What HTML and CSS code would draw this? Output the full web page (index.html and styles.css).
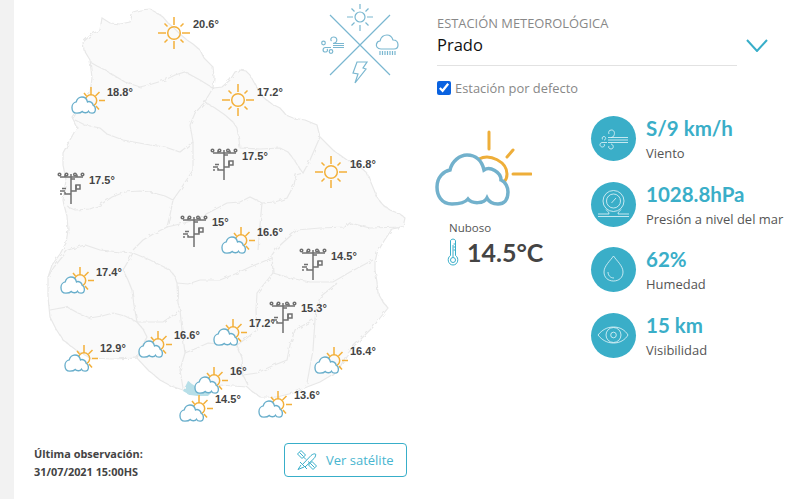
FILE: index.html
```html
<!DOCTYPE html>
<html lang="es">
<head>
  <meta charset="UTF-8">
  <meta name="viewport" content="width=device-width, initial-scale=1.0">
  <title>Estación meteorológica</title>
  <link rel="stylesheet" href="styles.css">
</head>
<body>

<div class="strip"></div>

<section class="left">
  <svg class="map" viewBox="14 0 406 432" width="406" height="432">
    <defs>
      <filter id="rough" x="-5%" y="-5%" width="110%" height="110%">
        <feTurbulence type="fractalNoise" baseFrequency="0.22" numOctaves="2" seed="4"/>
        <feDisplacementMap in="SourceGraphic" scale="3.5"/>
      </filter>
      <symbol id="sun" viewBox="-17 -17 34 34" overflow="visible">
        <g class="sun-line">
          <circle r="6.3"/>
          <path d="M0-16V-8M0 16V8M-16 0H-8M16 0H8M-9.5-9.5L-6.5-6.5M9.5-9.5L6.5-6.5M-9.5 9.5L-6.5 6.5M9.5 9.5L6.5 6.5"/>
        </g>
      </symbol>
      <symbol id="cloudsun" viewBox="0 0 33 28" overflow="visible">
        <g class="sun-line">
          <circle cx="19" cy="13.5" r="5.7"/>
          <path d="M19 0V8M23.5 9L27.5 5M27 13.5H33M24 19L27 22.5M12 6L14.5 9"/>
        </g>
        <path class="cloud-small" transform="translate(-.7 1.75) scale(.33)" d="M17 74C6 74 2 65 2 57C2 47 9 41 15 40C17 31 25 25 32 25C41 25 47 31 49 40C55 36 66 42 66 50C71 52 73 58 73 62C73 70 69 74 63 74C58 74 54 72 52 68C49 74 37 74 33 69C29 74 22 74 17 74Z"/>
      </symbol>
      <symbol id="station" viewBox="0 0 28 33" overflow="visible">
        <g class="station-line">
          <path d="M14 2V32M3 5H26M8 2.5V5M20 2.5V5M18 7H14M19 13V19H14M14 22H8V20M3 19H8M5 16.500H9M3 22H5"/>
          <circle cx="2.500" cy="2.500" r="1.300"/>
          <circle cx="9.500" cy="2.500" r="1.300"/>
          <circle cx="18" cy="2.500" r="1.300"/>
          <circle cx="25.500" cy="2.500" r="1.300"/>
          <rect x="19" y="13" width="4" height="4"/>
        </g>
      </symbol>
    </defs>

    <!-- pais -->
    <g filter="url(#rough)">
      <path class="land" d="M133 12L140 10L150 9L157 13L163 17L168 23L173 27L180 34L187 40L193 44L200 50L204 58L213 67L214 77L213 88L222 87L230 80L235 72L240 70L246 71L250 75L256 86L263 97L272 104L280 108L286 115L293 118L305 120L317 125L320 137L327 144L333 150L340 155L347 160L358 165L367 173L372 185L377 197L383 205L390 210L400 214L405 218L403 227L392 229L384 241L377 253L375 262L375 270L377 282L378 293L383 302L388 308L380 318L373 327L363 337L353 347L346 356L340 367L330 376L320 382L307 387L293 393L277 397L260 397L253 392L247 387L233 386L220 385L213 390L207 393L195 392L183 390L171 386L160 380L148 370L137 358L112 359L90 358L76 350L63 340L56 329L50 317L48 297L48 277L52 265L60 254L66 243L68 230L67 216L64 205L63 200L66 180L63 165L63 153L70 140L77 127L72 117L80 105L90 93L92 78L90 60L84 50L83 42L92 34L100 30L102 18L110 23L120 24L130 22Z"/>
      <g class="dept">
        <path d="M90 62L97 66L105 70L115 76L125 82L140 87L152 84L165 80L175 75L185 72L200 80L213 88"/>
        <path d="M213 88L207 98L205 102L195 113L190 125L192 136L193 142L180 152L165 147L150 145L123 140L107 134L100 128L85 125L75 120"/>
        <path d="M205 102L215 108L225 115L233 122L237 128L239 140L240 148L260 149L280 148L288 152L293 158L298 166L303 173L310 160L320 137"/>
        <path d="M303 173L296 175L294 185L287 198L275 202L262 203L250 197L240 202L227 203L210 212L195 220L180 224L167 227"/>
        <path d="M193 142L193 160L193 170L180 190L173 200L170 215L167 227L155 233L143 240L133 250"/>
        <path d="M68 207L75 210L90 209L100 205L112 197L125 192L140 191L150 192L165 196L173 200"/>
        <path d="M262 203L260 225L258 250"/>
        <path d="M273 273L272 255L277 248L297 230L320 228L345 227L350 223L370 228L403 227"/>
        <path d="M48 277L54 267L68 250L85 245L100 250L120 252L133 253"/>
        <path d="M50 310L67 307L78 313L90 318L102 316L113 313L125 316L137 322L143 329L147 337L141 348L137 358"/>
        <path d="M133 253L123 270L128 280L132 290L134 305L137 322L150 322L163 322L172 316L180 310L182 330L185 353L180 370L183 388"/>
        <path d="M133 253L150 260L170 270L175 277L177 283L178 303L180 310"/>
        <path d="M177 283L188 284L200 280L220 280L235 274L250 267L272 258"/>
        <path d="M185 353L197 348L208 343L222 344L237 345L242 358L243 375L248 385"/>
        <path d="M237 345L248 337L257 330L256 310L257 293L265 283L273 273"/>
        <path d="M273 273L290 278L310 282L333 282L350 272L373 260"/>
        <path d="M337 283L320 297L316 310L315 320L313 350L307 383"/>
        <path d="M313 320L295 330L290 345L287 360L272 366L257 373L243 375"/>
      </g>
      <path class="capital" d="M188 381L192 384L198 388L204 389L212 392L208 396L198 396L190 395L183 391Z"/>
    </g>

    <!-- etiquetas -->
    <g class="temp">
      <text x="193" y="28">20.6°</text>
      <text x="107" y="96">18.8°</text>
      <text x="257" y="96">17.2°</text>
      <text x="242" y="160">17.5°</text>
      <text x="350" y="168">16.8°</text>
      <text x="89" y="184">17.5°</text>
      <text x="212" y="226">15°</text>
      <text x="257" y="236">16.6°</text>
      <text x="331" y="260">14.5°</text>
      <text x="96" y="276">17.4°</text>
      <text x="301" y="312">15.3°</text>
      <text x="249" y="327">17.2°</text>
      <text x="174" y="339">16.6°</text>
      <text x="100" y="352">12.9°</text>
      <text x="350" y="355">16.4°</text>
      <text x="230" y="375">16°</text>
      <text x="215" y="403">14.5°</text>
      <text x="294" y="399">13.6°</text>
    </g>

    <!-- iconos del mapa -->
    <use href="#sun" x="157" y="16" width="34" height="34"/>
    <use href="#sun" x="221" y="83" width="34" height="34"/>
    <use href="#sun" x="314" y="155" width="34" height="34"/>
    <use href="#cloudsun" x="72" y="87" width="33" height="28"/>
    <use href="#cloudsun" x="222" y="227" width="33" height="28"/>
    <use href="#cloudsun" x="61" y="267" width="33" height="28"/>
    <use href="#cloudsun" x="65" y="345" width="33" height="28"/>
    <use href="#cloudsun" x="139" y="331" width="33" height="28"/>
    <use href="#cloudsun" x="214" y="319" width="33" height="28"/>
    <use href="#cloudsun" x="195" y="367" width="33" height="28"/>
    <use href="#cloudsun" x="180" y="395" width="33" height="28"/>
    <use href="#cloudsun" x="259" y="391" width="33" height="28"/>
    <use href="#cloudsun" x="315" y="347" width="33" height="28"/>
    <use href="#station" x="57" y="172" width="28" height="33"/>
    <use href="#station" x="210" y="148" width="28" height="33"/>
    <use href="#station" x="180" y="215" width="28" height="33"/>
    <use href="#station" x="299" y="248" width="28" height="33"/>
    <use href="#station" x="269" y="301" width="28" height="33"/>

    <!-- logo -->
    <g class="logo">
      <path d="M330 15L390 75M390 15L330 75"/>
      <circle cx="360" cy="17" r="5"/>
      <path d="M360 4V9M360 25V31M347 17H353M367 17H373M351.500 8.500L354.500 11.500M368.500 8.500L365.500 11.500M351.500 25.500L354.500 22.500M368.500 25.500L365.500 22.500"/>
      <path d="M333 43.500H344M333 45.500H344M333 47.500H344M333 43.500C338 43 338 37 333.500 37C331 37 330 39.500 331.500 41"/>
      <circle cx="323.500" cy="43" r="1.800"/>
      <path d="M331 47.500H325.500C322 48 322.500 52 325.500 52C327.500 52 328 50 327 49"/>
      <circle cx="331" cy="51.500" r="1.800"/>
      <path d="M381 49C377 49 376 46 376.500 44C377 42 379 41 380 41C381 37 384 35 387 35C390 35 392 37 393 40C396 40 398 42 398 45C398 48 396 49 394 49Z"/>
      <path d="M380 51V55M382.500 51V55M385 51V55M387.500 51V55M390 51V55M392.500 51V55M395 51V55"/>
      <path d="M357 62H367L363 68L366 69L355 83L358 74L353 73Z"/>
    </g>
  </svg>

  <div class="obs">
    <p class="obs-text">Última observación:<br>31/07/2021 15:00HS</p>
    <button class="sat-btn">
      <svg class="sat-icon" viewBox="0 0 20 20" width="20" height="20">
        <path d="M0.500 4L4 0.500L8.500 5L5 8.500ZM2.500 2.500L6.500 6.500M11.500 15L15 11.500L19.500 16L16 19.500ZM13.500 13.500L17.500 17.500M5 15L14 5.500C15.500 4 18 3.500 18.500 4C19 4.500 18.500 7 17 8.500L8 17M6.500 7L9 9.500M11 11.500L13.500 13.500M3 12L10 19M4 15L1 19.500L7 17"/>
      </svg>
      Ver satélite
    </button>
  </div>
</section>

<section class="right">
  <header class="station-head">
    <div class="station-select">
      <span class="station-title">ESTACIÓN METEOROLÓGICA</span>
      <span class="station-name">Prado</span>
    </div>
    <svg class="chevron" viewBox="0 0 22 13" width="22" height="13"><path d="M1 1L11 12L21 1"/></svg>
  </header>
  <label class="default-check"><input type="checkbox" checked> Estación por defecto</label>

  <div class="weather">
    <div class="current">
      <svg class="big-icon" viewBox="0 0 97 77" width="97" height="77">
        <path class="big-sun" d="M54 2V19M72 27L78 20M78 44H96M44 29C55 23 72 32 72 44C72 47 71 50 69 52"/>
        <path class="big-cloud" d="M17 74C6 74 2 65 2 57C2 47 9 41 15 40C17 31 25 25 32 25C41 25 47 31 49 40C55 36 66 42 66 50C71 52 73 58 73 62C73 70 69 74 63 74C58 74 54 72 52 68C49 74 37 74 33 69C29 74 22 74 17 74Z"/>
      </svg>
      <div class="cond">Nuboso</div>
      <div class="temp-now">
        <svg class="thermo" viewBox="0 0 12 28" width="12" height="28">
          <path d="M3.500 3C3.500 0.500 8.500 0.500 8.500 3V17.500C12.500 20 11 27 6 27C1 27 -0.500 20 3.500 17.500Z"/>
          <path d="M6 7V19M8.500 6H6.500M8.500 9H6.500M8.500 12H6.500"/>
          <circle cx="6" cy="22" r="2.500"/>
        </svg>
        <span>14.5°C</span>
      </div>
    </div>

    <ul class="stats">
      <li class="stat">
        <span class="stat-icon">
          <svg viewBox="0 0 45 45" width="45" height="45">
            <path d="M17 21.500H37M17 24H37M17 26.500H37M20 21.500C24 21.500 25 14 20.500 14C18 14 17 16 18 18M13 24C15 24 15.500 21 13 20.500C11 20.500 10.500 23 12 23.500M16 26.500H11C8 27 8.500 31 11.500 31C13.500 31 14 29 13 28M20 28C23 28.500 23 33 20 33C18 33 17 31 18 30"/>
          </svg>
        </span>
        <div class="stat-text"><b>S/9 km/h</b><span>Viento</span></div>
      </li>
      <li class="stat">
        <span class="stat-icon">
          <svg viewBox="0 0 45 45" width="45" height="45">
            <circle cx="22.500" cy="19" r="10.500"/>
            <circle cx="22.500" cy="19" r="7"/>
            <path d="M20.500 21L25 16M7 32H18C18 30 16.500 29.500 15 27.500M38 32H27C27 30 28.500 29.500 30 27.500M7 34.500H38"/>
          </svg>
        </span>
        <div class="stat-text"><b>1028.8hPa</b><span>Presión a nivel del mar</span></div>
      </li>
      <li class="stat">
        <span class="stat-icon">
          <svg viewBox="0 0 45 45" width="45" height="45">
            <path d="M22.500 9C19 14 13 19 13 25C13 30.500 17 34 22.500 34C28 34 32 30.500 32 25C32 19 26 14 22.500 9Z"/>
            <path d="M17 25C17 28 19 31 23 31"/>
          </svg>
        </span>
        <div class="stat-text"><b>62%</b><span>Humedad</span></div>
      </li>
      <li class="stat">
        <span class="stat-icon">
          <svg viewBox="0 0 45 45" width="45" height="45">
            <path d="M7 22C11 17 16 14 22.500 14C29 14 34 17 37 22C34 27 29 30 22.500 30C16 30 11 27 7 22Z"/>
            <circle cx="22.500" cy="22" r="7.500"/>
            <circle cx="22.500" cy="22" r="2.800"/>
          </svg>
        </span>
        <div class="stat-text"><b>15 km</b><span>Visibilidad</span></div>
      </li>
    </ul>
  </div>
</section>

</body>
</html>
```

FILE: styles.css
```css
body {
  display: flex;
  width: 788px;
  height: 499px;
  margin: 0;
  overflow: hidden;
  background-color: #fff;
  color: #555;
  font-family: 'Open Sans', sans-serif;
}

.strip {
  width: 14px;
  flex-shrink: 0;
  background-color: #f2f2f2;
}

.left {
  display: flex;
  flex-direction: column;
  width: 406px;
  flex-shrink: 0;
}

.map {
  display: block;
  flex-shrink: 0;
}

.land {
  fill: #fafafa;
  stroke: #e8e8e8;
  stroke-width: 1.2;
}

.dept path {
  fill: none;
  stroke: #e8e8e8;
  stroke-width: 1.2;
}

.capital {
  fill: #b7dfe8;
}

.temp text {
  fill: #444;
  font-family: 'Liberation Sans', sans-serif;
  font-size: 11px;
  font-weight: 700;
}

.sun-line {
  fill: none;
  stroke: #f3b03a;
  stroke-width: 1.5;
}

.cloud-small {
  fill: #fff;
  stroke: #68aecb;
  stroke-width: 4;
}

.station-line {
  fill: none;
  stroke: #707070;
  stroke-width: 1.5;
}

.logo {
  fill: none;
  stroke: #7ab7d0;
  stroke-width: 1.2;
}

.obs {
  display: flex;
  align-items: flex-start;
  justify-content: space-between;
  padding: 11px 13px 0 20px;
}

.obs-text {
  margin: 2px 0 0;
  color: #444;
  font-size: 10.900px;
  font-weight: 700;
  line-height: 18px;
}

.sat-btn {
  display: flex;
  align-items: center;
  gap: 9px;
  width: 123px;
  height: 34px;
  padding: 0 0 0 12px;
  border: 1px solid #38aec9;
  border-radius: 4px;
  background-color: #fff;
  color: #48b5cf;
  font-family: 'Open Sans', sans-serif;
  font-size: 13px;
}

.sat-icon path {
  fill: none;
  stroke: #38aec9;
  stroke-width: 1;
}

.right {
  flex: 1;
  padding: 15px 0 0 17px;
}

.station-head {
  display: flex;
  align-items: flex-start;
  gap: 9px;
}

.station-select {
  display: flex;
  flex-direction: column;
  width: 300px;
  height: 50px;
  border-bottom: 1px solid #e2e2e2;
}

.station-title {
  color: #888;
  font-size: 12.900px;
  line-height: 17px;
}

.station-name {
  margin-top: 1px;
  color: #111;
  font-size: 16.500px;
  line-height: 23px;
}

.chevron {
  margin-top: 24px;
}

.chevron path {
  fill: none;
  stroke: #38aec9;
  stroke-width: 2;
}

.default-check {
  display: flex;
  align-items: center;
  gap: 4px;
  margin-top: 13px;
  color: #888;
  font-size: 12.900px;
}

.default-check input {
  width: 14px;
  height: 14px;
  margin: 0;
  accent-color: #0a62e0;
}

.weather {
  display: flex;
  margin-top: 19px;
}

.current {
  width: 154px;
  flex-shrink: 0;
  padding-top: 14px;
}

.big-icon {
  display: block;
  margin-left: -2px;
}

.big-sun {
  fill: none;
  stroke: #eeae39;
  stroke-width: 3;
  stroke-linecap: round;
}

.big-cloud {
  fill: #fff;
  stroke: #72b1cc;
  stroke-width: 3.500;
}

.cond {
  margin: 13px 0 0 12px;
  color: #555;
  font-size: 11.500px;
  line-height: 16px;
}

.temp-now {
  display: flex;
  align-items: center;
  gap: 8px;
  margin: 1px 0 0 10px;
  color: #444;
  font-family: 'Lato', sans-serif;
  font-size: 25px;
  font-weight: 700;
}

.thermo {
  fill: none;
  stroke: #38aec9;
  stroke-width: 1;
}

.stats {
  display: flex;
  flex-direction: column;
  gap: 20.500px;
  margin: 0;
  padding: 0;
  list-style: none;
}

.stat {
  display: flex;
  align-items: flex-start;
  gap: 10px;
  height: 45px;
}

.stat-icon {
  display: block;
  width: 45px;
  height: 45px;
  flex-shrink: 0;
  border-radius: 50%;
  background-color: #3aaec8;
}

.stat-icon svg {
  display: block;
  fill: none;
  stroke: #e8f6fa;
  stroke-width: 0.800;
}

.stat-text {
  display: flex;
  flex-direction: column;
  gap: 4px;
  white-space: nowrap;
}

.stat-text b {
  color: #3aaec8;
  font-family: 'Lato', sans-serif;
  font-size: 20.500px;
  font-weight: 700;
  line-height: 24px;
}

.stat-text span {
  color: #555;
  font-size: 12.950px;
  line-height: 18px;
}
```
